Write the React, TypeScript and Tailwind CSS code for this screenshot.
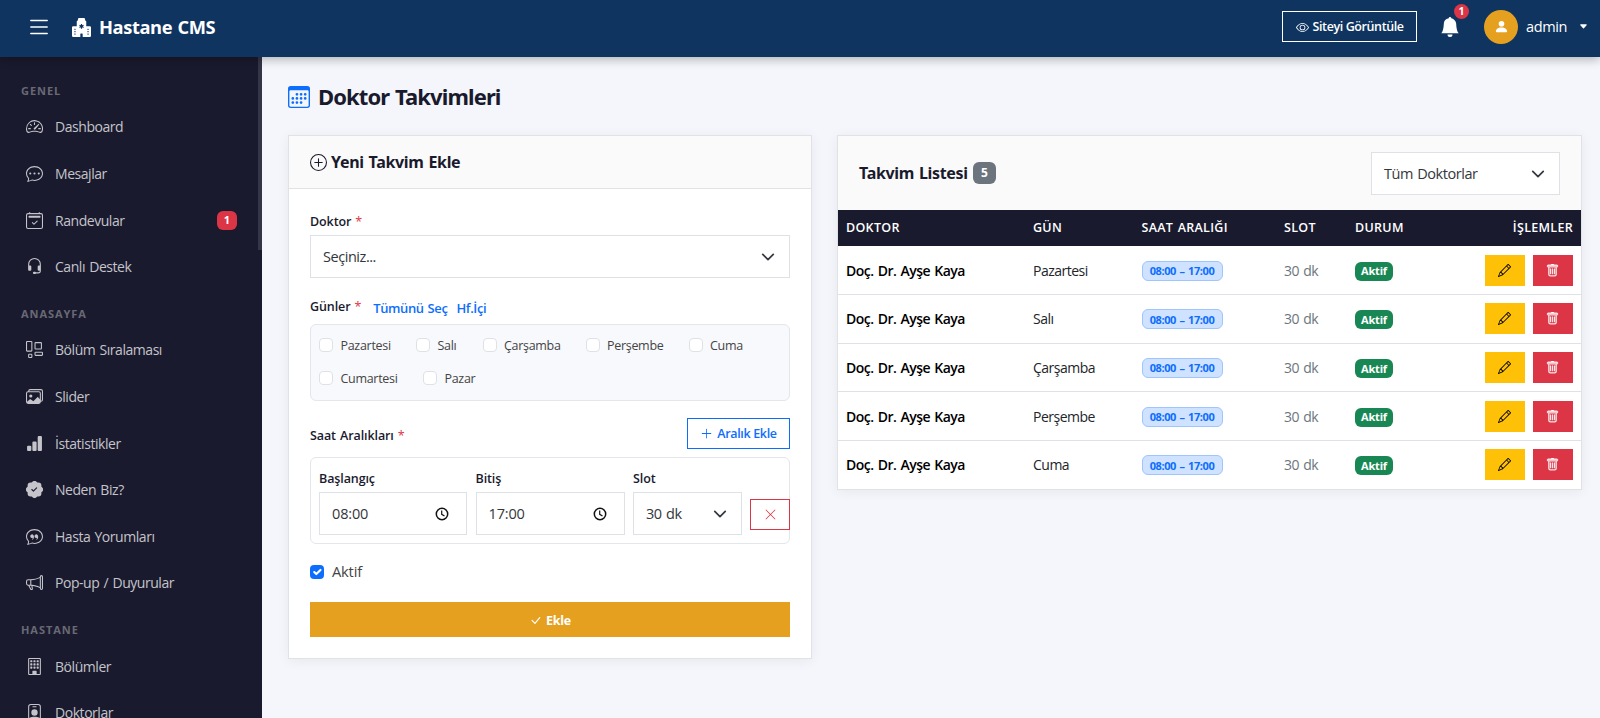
import React from 'react';
import type { IconType } from 'react-icons';
import {
  BsBarChartFill, BsBellFill, BsBuilding, BsCalendar2Check, BsCalendar3, BsCaretDownFill, BsChatDots,
  BsChatQuote, BsCheckLg, BsEye, BsHeadset, BsHospitalFill, BsImages, BsLayoutWtf, BsList,
  BsMegaphone, BsPatchCheckFill, BsPencil, BsPersonBadge, BsPersonFill, BsPlusCircle, BsPlusLg,
  BsSpeedometer2, BsTrash, BsXLg,
} from 'react-icons/bs';

interface NavItem {
  label: string;
  icon: IconType;
  badge?: number;
}

const NAV: { title: string; items: NavItem[] }[] = [
  {
    title: 'GENEL',
    items: [
      { label: 'Dashboard', icon: BsSpeedometer2 },
      { label: 'Mesajlar', icon: BsChatDots },
      { label: 'Randevular', icon: BsCalendar2Check, badge: 1 },
      { label: 'Canlı Destek', icon: BsHeadset },
    ],
  },
  {
    title: 'ANASAYFA',
    items: [
      { label: 'Bölüm Sıralaması', icon: BsLayoutWtf },
      { label: 'Slider', icon: BsImages },
      { label: 'İstatistikler', icon: BsBarChartFill },
      { label: 'Neden Biz?', icon: BsPatchCheckFill },
      { label: 'Hasta Yorumları', icon: BsChatQuote },
      { label: 'Pop-up / Duyurular', icon: BsMegaphone },
    ],
  },
  {
    title: 'HASTANE',
    items: [
      { label: 'Bölümler', icon: BsBuilding },
      { label: 'Doktorlar', icon: BsPersonBadge },
    ],
  },
];

const DAYS = [
  { label: 'Pazartesi', width: 'w-[97px]' },
  { label: 'Salı', width: 'w-[66.5px]' },
  { label: 'Çarşamba', width: 'w-[103px]' },
  { label: 'Perşembe', width: 'w-[103px]' },
  { label: 'Cuma', width: 'w-[80px]' },
  { label: 'Cumartesi', width: 'w-[104px]' },
  { label: 'Pazar', width: 'w-[80px]' },
];

const ROWS = ['Pazartesi', 'Salı', 'Çarşamba', 'Perşembe', 'Cuma'];

export default function App() {
  return (
    <div className="h-[718px] flex flex-col overflow-hidden bg-[#f4f6fb] font-['Open_Sans','Noto_Sans',sans-serif] [word-spacing:1px] text-[#1a1a2e]">
      <TopBar />
      <div className="flex flex-1 min-h-0">
        <Sidebar />
        <main className="flex-1 pl-[26px] pr-[18px] pt-[25px]">
          <h1 className="flex items-center gap-[8px] h-[30px] mb-[23px] font-['Noto_Sans',sans-serif] text-[22px] font-bold tracking-[-0.9px]">
            <BsCalendar3 size={22} className="text-[#0d6efd] mb-px" />
            <span className="pb-[2px]">Doktor Takvimleri</span>
          </h1>
          <div className="flex items-start gap-[25px]">
            <ScheduleForm />
            <ScheduleList />
          </div>
        </main>
      </div>
    </div>
  );
}

// ── Top bar ──────────────────────────────────────────────

const TopBar: React.FC = () => (
  <header className="relative z-10 flex items-center h-[57px] shrink-0 pl-[26px] pr-[12px] bg-[#0f3460] text-white shadow-[0_2px_10px_rgba(0,0,0,0.3)]">
    <BsList size={26} className="mb-[4px]" />
    <div className="flex items-center gap-2 ml-[20px] pb-[3px] text-[18.3px] font-bold tracking-[-0.4px]">
      <BsHospitalFill size={19} />
      Hastane CMS
    </div>
    <button className="flex items-center justify-center gap-1 ml-auto mb-[4px] w-[135px] h-[31px] pt-px border border-white text-[12.5px] font-semibold tracking-[-0.4px] whitespace-nowrap">
      <BsEye size={13} />
      Siteyi Görüntüle
    </button>
    <div className="relative ml-[23px] mb-[3px]">
      <BsBellFill size={20} />
      <span className="absolute left-[14px] -top-[13px] w-[15px] h-[15px] rounded-full bg-[#dc3545] text-[10.5px] font-bold leading-[15px] text-center">1</span>
    </div>
    <div className="flex items-center ml-[24px] mb-[4px]">
      <span className="flex items-center justify-center w-[34px] h-[34px] rounded-full bg-[#e6a020]">
        <BsPersonFill size={15} />
      </span>
      <span className="ml-2 text-[14.5px] tracking-[-0.4px]">admin</span>
      <BsCaretDownFill size={9} className="ml-[12px]" />
    </div>
  </header>
);

// ── Sidebar ──────────────────────────────────────────────

const Sidebar: React.FC = () => (
  <aside className="relative w-[262px] shrink-0 pt-[10px] bg-[#1a1a2e] overflow-hidden">
    <span className="absolute right-0 top-0 w-[4px] h-[193px] bg-[#353547]" />
    {NAV.map((section) => (
      <div key={section.title}>
        <div className="h-[36.6px] pt-[15.8px] pl-[21px] text-[11px] leading-[16px] font-bold tracking-[0.95px] text-[#696974]">
          {section.title}
        </div>
        {section.items.map(({ label, icon: Icon, badge }) => (
          <a key={label} className="flex items-center h-[46.6px] pl-[26px] pr-[25px] text-[14px] tracking-[-0.45px] text-[#c4c4ca]">
            <Icon size={17} />
            <span className="ml-[12px]">{label}</span>
            {badge && (
              <span className="ml-auto w-[20px] h-[19px] rounded-[6px] bg-[#dc3545] text-white text-[11px] font-bold leading-[18px] text-center tracking-normal">
                {badge}
              </span>
            )}
          </a>
        ))}
      </div>
    ))}
  </aside>
);

// ── Form ─────────────────────────────────────────────────

const ScheduleForm: React.FC = () => (
  <section className="w-[524px] h-[524px] bg-white border border-[#e0e2e6] shadow-[0_2px_12px_rgba(0,0,0,0.06)]">
    <h2 className="flex items-center gap-1 h-[53px] px-[21px] border-b border-[#e0e2e6] bg-[#fafafa] font-['Noto_Sans',sans-serif] text-[16px] font-bold tracking-[-0.32px]">
      <BsPlusCircle size={17} />
      Yeni Takvim Ekle
    </h2>
    <div className="px-[21px] pt-[21px]">
      <Label required>Doktor</Label>
      <SelectBox value="Seçiniz..." className="mt-[5px] w-full" />

      <div className="flex items-start gap-[12px] mt-[17px]">
        <Label required>Günler</Label>
        <div className="flex gap-[9px] pt-[3px] text-[13px] leading-[20px] font-semibold tracking-[-0.4px] text-[#0d6efd]">
          <a>Tümünü Seç</a>
          <a>Hf.İçi</a>
        </div>
      </div>
      <div className="flex flex-wrap content-start h-[77px] mt-[6px] pl-[8px] pt-[4px] rounded-[6px] border border-[#e3e6ea] bg-[#f8f9fc]">
        {DAYS.map((day) => (
          <label key={day.label} className={`flex items-center gap-[7.5px] h-[33.5px] ${day.width}`}>
            <span className="w-[14px] h-[14px] shrink-0 mb-[2px] rounded-[4px] border border-[#dee2e6] bg-white" />
            <span className="pt-px text-[12.5px] tracking-[-0.3px] text-[#444]">{day.label}</span>
          </label>
        ))}
      </div>

      <div className="flex items-center justify-between mt-[17px]">
        <Label required>Saat Aralıkları</Label>
        <button className="flex items-center justify-center gap-[4px] w-[103px] h-[31px] pt-[2px] border border-[#0d6efd] text-[#0d6efd] text-[12.5px] font-semibold tracking-[-0.35px]">
          <BsPlusLg size={13} className="mb-[2px]" />
          Aralık Ekle
        </button>
      </div>
      <div className="flex items-end h-[87px] mt-[8px] pl-[8px] pb-[8px] rounded-[6px] border border-[#e3e6ea]">
        <div className="w-[148px] shrink-0">
          <Label>Başlangıç</Label>
          <TimeBox value="08:00" />
        </div>
        <div className="w-[149.5px] shrink-0 ml-[8.5px]">
          <Label>Bitiş</Label>
          <TimeBox value="17:00" />
        </div>
        <div className="w-[109px] shrink-0 ml-[8px]">
          <Label>Slot</Label>
          <SelectBox value="30 dk" className="mt-[5px] w-full" />
        </div>
        <button className="flex items-center justify-center w-[40px] h-[31px] ml-[8px] mb-[5px] shrink-0 border border-[#dc3545] text-[#dc3545]">
          <BsXLg size={13} />
        </button>
      </div>

      <label className="flex items-center gap-[8px] h-[20px] mt-[17.5px]">
        <span className="flex items-center justify-center w-[14px] h-[14px] rounded-[4px] bg-[#0d6efd] text-white">
          <svg width="14" height="14" viewBox="0 0 20 20" fill="none" stroke="currentColor" strokeWidth="3" strokeLinecap="round" strokeLinejoin="round">
            <path d="m6 10 3 3 6-6" />
          </svg>
        </span>
        <span className="text-[14.7px] tracking-[-0.2px] text-[#444]">Aktif</span>
      </label>
      <button className="flex items-center justify-center gap-[4px] w-full h-[35px] mt-[20.5px] pt-[3px] bg-[#e6a020] text-white text-[12.5px] font-bold tracking-[-0.3px]">
        <BsCheckLg size={13} className="mb-px" />
        Ekle
      </button>
    </div>
  </section>
);

interface LabelProps {
  children: React.ReactNode;
  required?: boolean;
}

const Label: React.FC<LabelProps> = ({ children, required }) => (
  <div className="h-[20px] text-[12.5px] leading-[23px] font-semibold tracking-[-0.1px] whitespace-nowrap">
    {children}
    {required && <span className="ml-1 font-normal text-[#dc3545]">*</span>}
  </div>
);

const SelectBox: React.FC<{ value: string; className: string }> = ({ value, className }) => (
  <div className={`flex items-center justify-between h-[43px] pl-[12px] pr-[14px] pt-px border border-[#dee2e6] bg-white text-[14.5px] tracking-[-0.45px] text-[#33363a] ${className}`}>
    {value}
    <svg width="14" height="14" viewBox="0 0 16 16" fill="none" stroke="#343a40" strokeWidth="2" strokeLinecap="round" strokeLinejoin="round">
      <path d="m2 5 6 6 6-6" />
    </svg>
  </div>
);

const TimeBox: React.FC<{ value: string }> = ({ value }) => (
  <div className="flex items-center justify-between h-[43px] mt-[5px] pl-[12px] pr-[17px] border border-[#dee2e6] bg-white text-[14.5px] tracking-[-0.15px] text-[#33363a]">
    {value}
    <svg width="14" height="14" viewBox="0 0 14 14" fill="none" stroke="#111" strokeWidth="1.5">
      <circle cx="7" cy="7" r="5.7" />
      <path d="M6.7 3.5v3.8l2.8 1.8" strokeWidth="1.2" />
    </svg>
  </div>
);

// ── List ─────────────────────────────────────────────────

const ScheduleList: React.FC = () => (
  <section className="flex-1 bg-white border border-[#e0e2e6] shadow-[0_2px_12px_rgba(0,0,0,0.06)]">
    <div className="flex items-center justify-between h-[74px] px-[21px] bg-[#fafafa]">
      <h2 className="flex items-center gap-[5px] font-['Noto_Sans',sans-serif] text-[16px] font-bold tracking-[-0.32px]">
        Takvim Listesi
        <span className="w-[23px] h-[22px] rounded-[6px] bg-[#6c757d] text-white text-[12px] leading-[22px] text-center">5</span>
      </h2>
      <SelectBox value="Tüm Doktorlar" className="w-[189px]" />
    </div>
    <table className="w-full table-fixed border-collapse text-left">
      <colgroup>
        <col className="w-[187px]" />
        <col className="w-[108.5px]" />
        <col className="w-[142.5px]" />
        <col className="w-[71px]" />
        <col className="w-[90px]" />
        <col />
      </colgroup>
      <thead>
        <tr className="h-[36px] bg-[#1a1a2e] text-white text-[12.5px] tracking-[0.3px]">
          <Th>DOKTOR</Th>
          <Th>GÜN</Th>
          <Th>SAAT ARALIĞI</Th>
          <Th>SLOT</Th>
          <Th>DURUM</Th>
          <Th className="text-right">İŞLEMLER</Th>
        </tr>
      </thead>
      <tbody>
        {ROWS.map((day) => (
          <tr key={day} className="h-[48.6px] border-b border-[#dee2e6] last:border-b-0 text-[14px] tracking-[-0.5px] text-black">
            <td className="pl-[8px] font-semibold">Doç. Dr. Ayşe Kaya</td>
            <td className="pl-[8px] text-[#212529]">{day}</td>
            <td className="pl-[8px]">
              <span className="flex items-center justify-center w-[81px] h-[20px] mt-px pt-px rounded-[6px] border border-[#9ec5fe] bg-[#cfe2ff] text-[#0d6efd] text-[11px] font-bold tracking-[-0.4px]">
                08:00 – 17:00
              </span>
            </td>
            <td className="pl-[8px] text-[#6c757d]">30 dk</td>
            <td className="pl-[8px]">
              <span className="flex items-center justify-center w-[38px] h-[19px] mt-[2px] pt-px rounded-[6px] bg-[#198754] text-white text-[11px] font-bold tracking-[-0.2px]">
                Aktif
              </span>
            </td>
            <td className="pr-[8.5px]">
              <div className="flex justify-end gap-[8px]">
                <button className="flex items-center justify-center w-[40px] h-[31px] bg-[#ffc107] text-black">
                  <BsPencil size={13} />
                </button>
                <button className="flex items-center justify-center w-[40px] h-[31px] bg-[#dc3545] text-white">
                  <BsTrash size={13} strokeWidth={0.4} />
                </button>
              </div>
            </td>
          </tr>
        ))}
      </tbody>
    </table>
  </section>
);

const Th: React.FC<{ children: React.ReactNode; className?: string }> = ({ children, className = '' }) => (
  <th className={`px-[8px] font-semibold ${className}`}>{children}</th>
);
